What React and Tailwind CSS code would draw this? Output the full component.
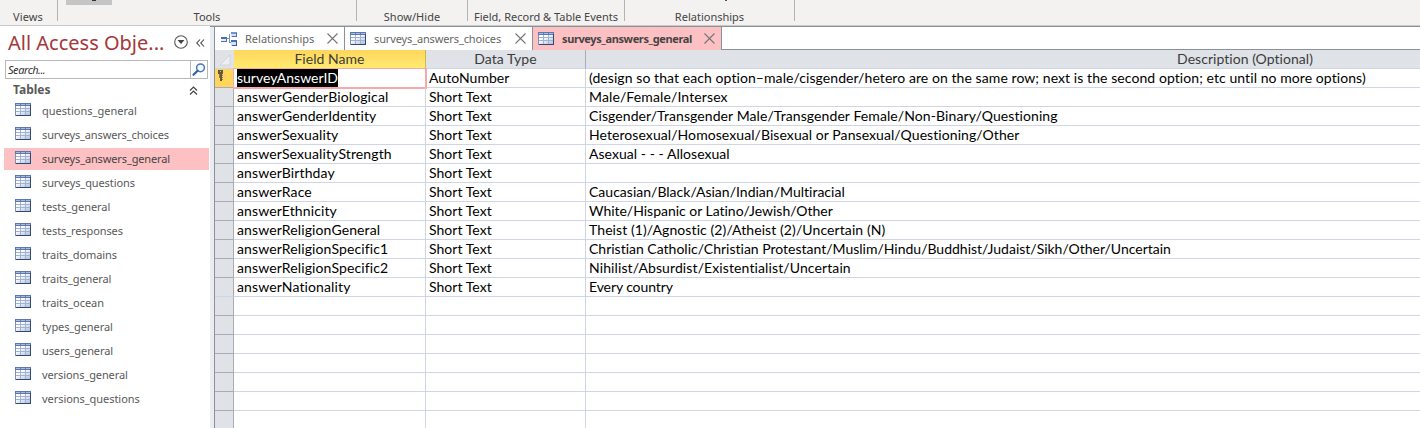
import React from "react";

const NAV = [
  ["questions_general", "tracking-[0px]"],
  ["surveys_answers_choices", "tracking-[-0.14px]"],
  ["surveys_answers_general", "tracking-[-0.13px]"],
  ["surveys_questions", "tracking-[-0.1px]"],
  ["tests_general", "tracking-[-0.05px]"],
  ["tests_responses", "tracking-[-0.1px]"],
  ["traits_domains", "tracking-[-0.1px]"],
  ["traits_general", "tracking-[-0.1px]"],
  ["traits_ocean", "tracking-[-0.05px]"],
  ["types_general", "tracking-[-0.1px]"],
  ["users_general", "tracking-[-0.1px]"],
  ["versions_general", "tracking-[-0.1px]"],
  ["versions_questions", "tracking-[-0.05px]"],
];

const FIELDS = [
  ["surveyAnswerID", "AutoNumber", "(design so that each option–male/cisgender/hetero are on the same row; next is the second option; etc until no more options)", "tracking-[0.075px]"],
  ["answerGenderBiological", "Short Text", "Male/Female/Intersex", "tracking-[0.12px]"],
  ["answerGenderIdentity", "Short Text", "Cisgender/Transgender Male/Transgender Female/Non-Binary/Questioning", "tracking-[0.09px]"],
  ["answerSexuality", "Short Text", "Heterosexual/Homosexual/Bisexual or Pansexual/Questioning/Other", "tracking-[0.07px]"],
  ["answerSexualityStrength", "Short Text", "Asexual - - - Allosexual", "tracking-[0.04px]"],
  ["answerBirthday", "Short Text", "", ""],
  ["answerRace", "Short Text", "Caucasian/Black/Asian/Indian/Multiracial", "tracking-[0.01px]"],
  ["answerEthnicity", "Short Text", "White/Hispanic or Latino/Jewish/Other", "tracking-[-0.02px]"],
  ["answerReligionGeneral", "Short Text", "Theist (1)/Agnostic (2)/Atheist (2)/Uncertain (N)", "tracking-[0.09px]"],
  ["answerReligionSpecific1", "Short Text", "Christian Catholic/Christian Protestant/Muslim/Hindu/Buddhist/Judaist/Sikh/Other/Uncertain", "tracking-[-0.005px]"],
  ["answerReligionSpecific2", "Short Text", "Nihilist/Absurdist/Existentialist/Uncertain", "tracking-[0.11px]"],
  ["answerNationality", "Short Text", "Every country", "tracking-[-0.1px]"],
  ["", "", ""], ["", "", ""], ["", "", ""], ["", "", ""], ["", "", ""], ["", "", ""], ["", "", ""],
];

function TableIcon() {
  return (
    <svg width="16" height="13" viewBox="0 0 16 13" shapeRendering="crispEdges" className="block shrink-0">
      <defs>
        <linearGradient id="cells" x1="0" y1="0" x2="1" y2="1">
          <stop offset="0.3" stopColor="#ffffff" />
          <stop offset="1" stopColor="#a9bfe6" />
        </linearGradient>
      </defs>
      <rect width="16" height="13" fill="#7d90b5" />
      <rect x="1" y="3" width="14" height="9" fill="url(#cells)" />
      <rect width="16" height="3" fill="#5b78b0" />
      <path d="M1 1h4v1H1zM6 1h4v1H6zM11 1h4v1h-4z" fill="#a9bce0" />
      <path d="M1 5.5h14M1 8.5h14M5.5 3v9M10.5 3v9" stroke="#a3b2d1" fill="none" />
      <path d="M15.5 2v11M1 12.5h15" stroke="#34496c" fill="none" />
    </svg>
  );
}

function RelationIcon() {
  return (
    <svg width="16" height="14" viewBox="0 0 16 14" shapeRendering="crispEdges" className="block shrink-0">
      <path d="M6 6.5h3M8.500 2v9M8 10.500h2" stroke="#8094bb" fill="none" />
      <rect x="0" y="5" width="6" height="5" fill="#e8effa" />
      <rect x="0" y="5" width="6" height="2" fill="#416fc0" />
      <path d="M0 9.5h6M5.500 6v4" stroke="#5272ad" fill="none" />
      <rect x="10" y="0" width="6" height="5" fill="#d3dff4" />
      <rect x="10" y="0" width="6" height="2" fill="#6f93d3" />
      <path d="M15.500 1v4M11 4.500h5" stroke="#5675ac" fill="none" />
      <rect x="10" y="8" width="6" height="6" fill="#d3dff4" />
      <rect x="10" y="8" width="6" height="2" fill="#416fc0" />
      <path d="M15.500 9v5M11 13.500h5" stroke="#3f5d94" fill="none" />
    </svg>
  );
}

function Close() {
  return (
    <svg width="11" height="11" viewBox="0 0 11 11" className="block shrink-0">
      <path d="M.5.5l10 10M10.500.5l-10 10" stroke="#757575" strokeWidth="1.100" fill="none" />
    </svg>
  );
}

function Group({ className, children }) {
  return (
    <div className={"flex h-[21px] shrink-0 items-end justify-center border-r border-[#b3b3b3] leading-[9px] whitespace-nowrap " + className}>
      {children}
    </div>
  );
}

function Ribbon() {
  return (
    <div className="flex h-[26px] shrink-0 overflow-hidden border-b border-[#c9c9c9] bg-[#f3f2f1] font-['Noto_Sans',sans-serif] text-[11px] text-[#444444]">
      <Group className="w-[58px] pr-[1px]"><span className="tracking-[0.15px]">Views</span></Group>
      <Group className="relative w-[299px]">
        <span className="absolute top-0 left-[8px] h-[5px] w-[46px] bg-[#c5c5c5]" />
        <span className="absolute top-0 left-[34px] h-px w-[4px] bg-[#333333]" />
        <span>Tools</span>
      </Group>
      <Group className="w-[111px]"><span className="tracking-[0.05px]">Show/Hide</span></Group>
      <Group className="w-[157px]"><span className="tracking-[0px]">Field, Record &amp; Table Events</span></Group>
      <Group className="relative w-[170px]">
        <span className="absolute top-0 left-[100px] h-px w-[2px] bg-[#555555]" />
        <span>Relationships</span>
      </Group>
    </div>
  );
}

function Sidebar() {
  return (
    <aside className="flex w-[210px] shrink-0 flex-col bg-white font-['Noto_Sans',sans-serif] text-[#595959]">
      <div className="flex h-[34px] items-center pl-2">
        <h1 className="w-[159px] whitespace-nowrap text-[20px] leading-[34px] text-[#a4373a]">All Access Obje...</h1>
        <svg width="14" height="14" viewBox="0 0 14 14" className="ml-[7px] block -translate-y-px">
          <circle cx="7" cy="7" r="6.300" fill="none" stroke="#555" strokeWidth="1.100" />
          <path d="M3.500 5h7L7 9z" fill="#444" />
        </svg>
        <svg width="9" height="8" viewBox="0 0 9 8" className="ml-[8px] block">
          <path d="M4 .5L.8 4 4 7.500M8 .5L4.800 4 8 7.500" fill="none" stroke="#444" strokeWidth="1.100" />
        </svg>
      </div>
      <div className="ml-[5px] flex h-[19px] w-[203px] items-center border border-[#b8b8b8] bg-white">
        <span className="flex-1 pl-[2px] text-[11px] leading-[17px] text-[#333333] italic tracking-[-0.45px]">Search...</span>
        <div className="flex h-full w-[17px] items-center justify-center border-l border-[#b8b8b8]">
          <svg width="14" height="13" viewBox="0 0 14 13" className="block">
            <circle cx="8.500" cy="4.800" r="3.900" fill="#f4f9ff" stroke="#4679b8" strokeWidth="1.500" />
            <path d="M5.600 7.800L1.500 11.800" stroke="#31629f" strokeWidth="2.200" strokeLinecap="round" />
          </svg>
        </div>
      </div>
      <div className="flex h-[20px] items-center justify-between pr-[12px] pl-[13px] pt-[2px]">
        <h2 className="text-[12px] leading-[20px] font-bold text-[#595959]">Tables</h2>
        <svg width="9" height="9" viewBox="0 0 9 9" className="block">
          <path d="M1 4.500L4.500 1 8 4.500M1 8.500L4.500 5 8 8.500" fill="none" stroke="#444" strokeWidth="1.200" />
        </svg>
      </div>
      <ul className="flex flex-col">
        {NAV.map(([name, track], i) => (
          <li key={name} className="flex h-[24px] items-center pl-1">
            <div className={"flex h-[22px] w-[205px] items-start gap-[11px] pl-[11px] " + (i === 2 ? "bg-[#fdc1c3] text-[#444444]" : "")}>
              <div className="pt-[3px]"><TableIcon /></div>
              <span className={"text-[11px] leading-[21px] whitespace-nowrap " + track}>{name}</span>
            </div>
          </li>
        ))}
      </ul>
    </aside>
  );
}

function Tabs() {
  return (
    <div className="flex h-[24px] shrink-0 border-t border-[#8b9099] bg-white font-['Noto_Sans',sans-serif] text-[11px] leading-[24px] whitespace-nowrap text-[#666666]">
      <div className="flex w-[130px] shrink-0 items-center border-r border-[#8b9099] pl-[6px]">
        <RelationIcon />
        <span className="ml-[8px] w-[82px]">Relationships</span>
        <Close />
      </div>
      <div className="flex w-[187px] shrink-0 items-center pl-[5px]">
        <div className="-mt-px"><TableIcon /></div>
        <span className="ml-[8px] w-[141px] tracking-[-0.13px]">surveys_answers_choices</span>
        <Close />
      </div>
      <div className="flex w-[190px] shrink-0 items-center border-x border-[#8b9099] bg-[#fdc1c3] pl-[5px] font-bold text-[#444444]">
        <div className="-mt-px"><TableIcon /></div>
        <span className="ml-[8px] w-[142px] tracking-[-0.38px]">surveys_answers_general</span>
        <Close />
      </div>
      <div className="flex-1 border-b border-[#8b9099]" />
    </div>
  );
}

function KeyIcon() {
  return (
    <svg width="6" height="11" viewBox="0 0 6 11" shapeRendering="crispEdges" className="block">
      <path d="M0 0h5v4H4v7H2V4H0z" fill="#5f573f" />
      <path d="M2 1h1v1H2z" fill="#d9bd5c" />
      <path d="M4 5h1v1H4zM4 7h1v1H4zM4 9h1v1H4zM1 4h1v4H1z" fill="#8b7c4c" />
    </svg>
  );
}

function Grid() {
  return (
    <div className="flex flex-1 flex-col overflow-hidden font-['Lato',sans-serif] text-[14px] tracking-[0.04px] whitespace-nowrap text-black [font-variant-ligatures:none]">
      <div className="flex h-[19px] shrink-0 bg-[#dfe2e7] leading-[18px] text-[#3c3c3c]">
        <div className="flex w-[19px] shrink-0 items-start border-b border-[#cfd5e4] pt-[4px] pl-[4px]">
          <svg width="12" height="12" viewBox="0 0 12 12" className="block">
            <path d="M11 1v10H1z" fill="#eceff4" stroke="#c3cad5" strokeWidth=".6" />
          </svg>
        </div>
        <div className="w-[192px] shrink-0 border-r border-[#c9b65c] bg-linear-to-b from-[#ffd65b] to-[#ffec72] text-center">Field Name</div>
        <div className="w-[160px] shrink-0 border-r border-b border-r-[#a9adb5] border-b-[#cfd5e4] text-center">Data Type</div>
        <div className="w-[1318px] shrink-0 border-b border-[#cfd5e4] text-center">Description (Optional)</div>
      </div>
      {FIELDS.map(([name, type, desc, track], i) => (
        <div key={i} className="flex h-[19px] shrink-0 leading-[18px]">
          <div className={"w-[19px] shrink-0 border-r border-b border-r-[#a9adb3] pl-[3px] pt-[1px] " + (i === 0 ? "bg-[#ffd65b] " : "bg-[#dfe2e7] ") + (i === 11 ? "border-b-[#cfd5e4]" : "border-b-[#a9adb3]")}>
            {i === 0 && <KeyIcon />}
          </div>
          <div className="relative w-[192px] shrink-0 border-r border-b border-[#cfd5e4] pl-[3px] tracking-[0.12px]">
            {i === 0 && <div className="absolute -top-px -left-px h-[21px] w-[194px] border border-r-2 border-b-2 border-[#f7a8ab]" />}
            <span className={i === 0 ? "relative inline-block h-[18px] bg-black tracking-[0px] text-white" : "relative"}>{name}</span>
          </div>
          <div className="w-[160px] shrink-0 border-r border-b border-[#cfd5e4] pl-[3px]">{type}</div>
          <div className={"w-[1318px] shrink-0 border-b border-[#cfd5e4] pl-[3px] " + track}>{desc}</div>
        </div>
      ))}
    </div>
  );
}

export default function App() {
  return (
    <div className="flex h-[428px] w-[1420px] flex-col overflow-hidden bg-white">
      <Ribbon />
      <div className="flex min-h-0 flex-1">
        <Sidebar />
        <div className="w-[5px] shrink-0 border-t border-r border-[#8b9099] bg-[#e9ecf1]" />
        <main className="flex min-w-0 flex-1 flex-col">
          <Tabs />
          <Grid />
        </main>
      </div>
    </div>
  );
}
